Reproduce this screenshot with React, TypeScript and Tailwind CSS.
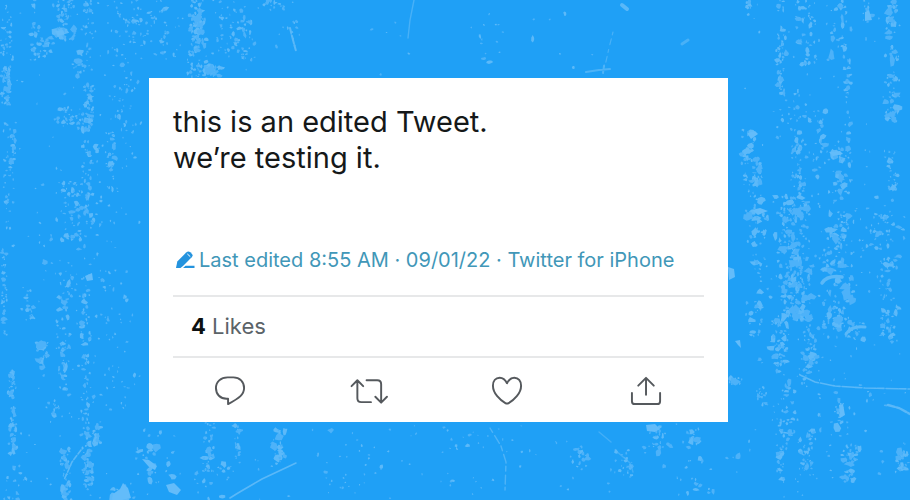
import React from "react";

type Band = [x: number, y: number, w: number, h: number, count: number, size: number];

// Vertical bands of worn paint: area, number of flakes, largest flake.
const bands: Band[] = [
  [0, 0, 14, 60, 34, 2], [0, 66, 12, 40, 60, 3], [0, 100, 16, 130, 40, 2],
  [28, 0, 12, 60, 24, 3], [36, 38, 18, 20, 20, 3], [50, 0, 30, 40, 50, 3],
  [54, 28, 12, 8, 10, 5], [72, 50, 14, 30, 14, 3], [80, 0, 14, 70, 38, 2],
  [82, 85, 14, 45, 60, 3], [52, 108, 42, 20, 40, 2], [98, 0, 50, 80, 50, 2],
  [100, 80, 48, 90, 46, 2], [104, 132, 12, 50, 24, 3], [8, 130, 10, 40, 24, 3],
  [78, 140, 24, 80, 44, 3], [60, 190, 34, 50, 44, 4], [0, 180, 148, 70, 50, 2],
  [120, 0, 30, 50, 20, 3], [146, 0, 40, 60, 40, 3], [186, 0, 22, 78, 90, 3],
  [188, 16, 18, 26, 60, 4], [200, 66, 24, 10, 30, 4], [208, 0, 50, 60, 55, 2],
  [232, 20, 26, 50, 24, 2], [256, 0, 44, 10, 16, 3], [270, 20, 34, 30, 14, 2],
  [0, 250, 8, 90, 40, 3], [20, 290, 20, 30, 24, 3], [40, 260, 70, 30, 24, 3],
  [56, 290, 16, 105, 60, 3], [34, 340, 14, 28, 30, 5], [80, 290, 12, 200, 90, 3],
  [8, 370, 9, 80, 60, 3], [88, 425, 14, 18, 24, 4], [60, 448, 12, 52, 50, 4],
  [84, 450, 10, 38, 30, 3], [92, 270, 54, 140, 50, 2], [44, 400, 20, 16, 14, 3],
  [0, 450, 30, 50, 20, 3], [112, 485, 24, 15, 24, 8], [130, 430, 50, 65, 34, 4],
  [202, 422, 14, 50, 36, 4], [232, 424, 10, 40, 24, 3], [272, 430, 14, 34, 36, 4],
  [180, 460, 60, 40, 22, 3], [310, 428, 90, 70, 26, 2], [400, 425, 110, 70, 14, 2],
  [460, 10, 60, 55, 14, 2], [520, 5, 100, 65, 8, 2], [350, 5, 100, 70, 6, 2],
  [774, 0, 14, 90, 52, 3], [790, 0, 30, 65, 44, 4], [828, 0, 24, 60, 30, 4],
  [862, 0, 12, 22, 16, 4], [884, 0, 16, 60, 50, 4], [742, 0, 14, 20, 10, 3],
  [774, 90, 40, 50, 32, 3], [844, 60, 8, 100, 36, 3], [882, 72, 18, 50, 48, 4],
  [738, 130, 20, 55, 40, 4], [756, 158, 6, 30, 20, 3], [788, 130, 20, 65, 50, 3],
  [808, 110, 20, 70, 30, 4], [828, 148, 26, 50, 42, 4], [884, 150, 16, 40, 34, 3],
  [742, 190, 30, 60, 40, 5], [770, 196, 42, 54, 105, 5], [828, 210, 22, 40, 46, 4],
  [860, 205, 48, 45, 44, 4], [774, 250, 40, 70, 130, 4], [820, 250, 34, 80, 72, 5],
  [770, 320, 20, 52, 60, 4], [800, 310, 18, 65, 42, 4], [744, 250, 28, 90, 34, 4],
  [874, 250, 28, 95, 70, 3], [838, 320, 30, 20, 26, 4], [750, 190, 150, 300, 110, 2],
  [774, 380, 22, 70, 40, 3], [836, 400, 10, 30, 16, 4], [728, 378, 16, 6, 18, 4],
  [754, 385, 16, 20, 18, 2], [800, 430, 16, 45, 36, 4], [838, 445, 26, 20, 30, 5],
  [776, 446, 10, 36, 18, 4], [640, 424, 32, 30, 28, 4], [680, 424, 26, 24, 18, 4],
  [570, 445, 22, 28, 22, 3], [610, 450, 26, 28, 24, 2], [650, 455, 100, 40, 22, 3],
  [895, 440, 15, 30, 22, 4], [840, 470, 16, 12, 16, 3], [0, 0, 148, 500, 120, 1],
  [728, 0, 182, 500, 130, 1], [150, 424, 570, 76, 60, 1], [780, 280, 30, 38, 34, 7],
  [842, 282, 12, 20, 18, 6],
];

const flakes = (() => {
  let seed = 1287;
  const next = () => {
    seed = (seed * 16807) % 2147483647;
    return seed / 2147483647;
  };
  const layers = ["", ""];
  for (const [x, y, w, h, count, size] of bands) {
    for (let i = 0; i < count; i++) {
      const cx = x + ((next() + next()) / 2) * w;
      const cy = y + next() * h;
      const r = 0.8 + next() * next() * size;
      const stretch = 0.7 + next() * 0.6;
      const turn = next() * 3;
      const points: string[] = [];
      for (let k = 0; k < 7; k++) {
        const a = turn + (k / 7) * Math.PI * 2;
        const d = r * (0.5 + next() * 0.75);
        points.push(`${(cx + Math.cos(a) * d * stretch).toFixed(1)} ${(cy + (Math.sin(a) * d) / stretch).toFixed(1)}`);
      }
      layers[next() > 0.5 ? 0 : 1] += `M${points.join("L")}Z`;
    }
  }
  return layers;
})();

function Texture() {
  return (
    <svg
      className="absolute inset-0 h-full w-full"
      viewBox="0 0 910 500"
      preserveAspectRatio="xMidYMid slice"
      aria-hidden="true"
    >
      <path d={flakes[0]} fill="#5cb9f9" />
      <path d={flakes[1]} fill="#4db2f9" />
      <g fill="none" stroke="#5ab8f8" strokeLinecap="round">
        <path d="M414 0L410 20L408 38" strokeWidth="1.4" opacity="0.7" />
        <path d="M290 28L293 40L296 51" strokeWidth="2" strokeDasharray="5 3 8 2" />
        <path d="M613 32L609 48L605 66" strokeWidth="1.2" strokeDasharray="3 4 6 5" opacity="0.7" />
        <path d="M586 72L599 70L610 69M604 66L603 73" strokeWidth="2" opacity="0.8" />
        <path d="M682 44L688 40" strokeWidth="3" opacity="0.7" />
        <path d="M622 5L627 9" strokeWidth="4" />
        <path d="M230 498L238 493L262 479L296 463" strokeWidth="1.6" />
        <path d="M800 375L815 382L835 386L865 388L910 389" strokeWidth="1.6" strokeDasharray="12 1 7 2" />
        <path d="M888 405L899 408L910 414" strokeWidth="2.4" strokeDasharray="7 2 3 1" />
        <path d="M490 428L501 446L506 462L505 490" strokeWidth="1.4" strokeDasharray="5 4 9 3" opacity="0.8" />
        <path d="M599 432L611 442M615 450L630 463L633 472" strokeWidth="1.4" opacity="0.6" />
        <path d="M822 283Q827 275 842 277" strokeWidth="3.5" />
        <path d="M846 334Q852 325 865 327" strokeWidth="3" />
        <path d="M81 450L72 462L64 480" strokeWidth="1.6" strokeDasharray="5 2" />
      </g>
      <g fill="#63bcfa">
        <path d="M166 485L174 483L181 490L177 495L169 492Z" />
        <path d="M113 494L120 489L123 483L128 488L131 498L122 500L112 500Z" />
        <path d="M142 459L149 460L157 466L155 470L149 467Z" />
        <path d="M646 425L655 424L660 429L655 432L647 431Z" />
        <path d="M728 267L734 269L735 277L729 280Z" />
        <path d="M752 210L760 208L768 211L758 215Z" />
        <path d="M735 341L740 340L741 348L738 345Z" />
        <path d="M829 152L840 151L843 154L833 156Z" />
        <path d="M747 133L755 131L758 134L751 139Z" />
        <path d="M865 12L869 10L872 20L865 21Z" />
        <path d="M839 405L843 404L845 415L840 418Z" />
        <path d="M55 31L63 30L65 34L58 36Z" />
        <path d="M85 276L92 273L93 280L87 281Z" />
      </g>
    </svg>
  );
}

function Pencil() {
  return (
    <svg width="20" height="20" viewBox="0 0 20 20" className="shrink-0" aria-hidden="true">
      <path
        d="M1 18L2.3 11.5L11.2 2.5Q13.2 .5 15.3 2.2L17 3.9Q18.3 5.5 16.7 7.2L8 16L5.5 18Z"
        fill="#2493de"
      />
      <path d="M12.6 4.2L15 6.4" stroke="#fff" strokeWidth="1" strokeLinecap="round" />
      <path d="M8 18L10.5 15.8H19.5V18Z" fill="#2493de" />
    </svg>
  );
}

const actions = [
  { label: "Reply", d: "M14 3.5H20C26.5 3.5 31 8 31 14.5C31 21 26.5 24.5 14.5 31V25.5H13C6.5 25.5 2 21 2 14.5C2 8 7 3.5 14 3.5Z" },
  { label: "Retweet", d: "M-1.5 12.5L4.5 6.5L10.5 12.5M4.5 7V25Q4.5 29 8.5 29H18.5M14 6.5H25Q29 6.5 29 10.5V28.5M23 23.5L29 29.5L35 23.5" },
  { label: "Like", d: "M16.5 9.5C14.5 5.5 12 3.8 9 3.8C4.8 3.8 2 7.2 2 12C2 20 9.5 27 14.8 30Q16.5 31 18.2 30C23.5 27 31 20 31 12C31 7.2 28.2 3.8 24 3.8C21 3.8 18.5 5.5 16.5 9.5Z" },
  { label: "Share", d: "M16.5 21.5V4M8.5 12L16.5 4L24.5 12M2 19.5V28Q2 31 5 31H28Q31 31 31 28V19.5" },
];

export default function App() {
  return (
    <main className="relative flex min-h-screen items-center overflow-hidden bg-[#1fa0f6] pr-[182px] pl-[149px] font-['Inter','Liberation_Sans',sans-serif]">
      <Texture />
      <article className="relative w-full bg-white px-6 pt-[26px]">
        <p className="text-[29px] leading-9 text-[#151819]">
          this is an edited Tweet.
          <br />
          we’re testing it.
        </p>
        <div className="mt-[70px] flex items-center border-b-2 border-[#e7e8e9] pb-[21px] pl-0.5 text-xl whitespace-nowrap text-[#4197b8]">
          <a href="#history" className="flex items-center gap-1">
            <Pencil />
            Last edited
          </a>
          <span className="whitespace-pre"> 8:55 AM · 09/01/22 · Twitter for iPhone</span>
        </div>
        <div className="flex h-[61px] items-center border-b-2 border-[#e7e8e9] px-[18px] text-[22px] text-[#5b6368]">
          <p>
            <strong className="font-bold text-[#0d1011]">4</strong> Likes
          </p>
        </div>
        <div className="-mx-3 grid h-16 grid-cols-4 items-center justify-items-center">
          {actions.map(({ label, d }) => (
            <button key={label} type="button" aria-label={label} className="text-[#55595d]">
              <svg
                width="33"
                height="33"
                viewBox="0 0 34 34"
                fill="none"
                stroke="currentColor"
                strokeWidth="2"
                strokeLinecap="round"
                strokeLinejoin="round"
                className="block overflow-visible"
              >
                <path d={d} />
              </svg>
            </button>
          ))}
        </div>
      </article>
    </main>
  );
}
